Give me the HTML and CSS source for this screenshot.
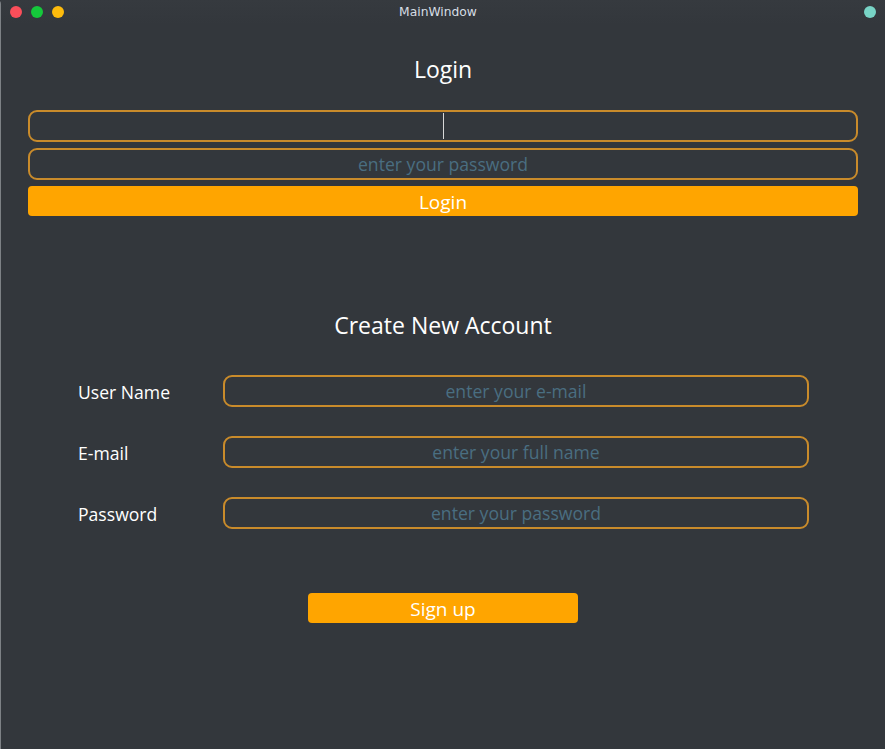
FILE: index.html
```html
<!DOCTYPE html>
<html>
<head>
<meta charset="utf-8">
<title>MainWindow</title>
<link rel="stylesheet" href="styles.css">
</head>
<body>
<div class="window">
  <div class="titlebar">
    <div class="lights">
      <span class="light red"></span>
      <span class="light green"></span>
      <span class="light yellow"></span>
    </div>
    <div class="title">MainWindow</div>
    <span class="light teal"></span>
  </div>
  <div class="content">
    <section class="login">
      <h1 class="heading">Login</h1>
      <div class="field"><span class="caret"></span></div>
      <div class="field"><span class="placeholder">enter your password</span></div>
      <button class="btn btn-wide">Login</button>
    </section>
    <section class="signup">
      <h2 class="heading heading-signup">Create New Account</h2>
      <div class="form">
        <div class="row">
          <label class="label">User Name</label>
          <div class="field field-form"><span class="placeholder">enter your e-mail</span></div>
        </div>
        <div class="row">
          <label class="label">E-mail</label>
          <div class="field field-form"><span class="placeholder">enter your full name</span></div>
        </div>
        <div class="row">
          <label class="label">Password</label>
          <div class="field field-form"><span class="placeholder">enter your password</span></div>
        </div>
      </div>
      <div class="signup-actions">
        <button class="btn btn-signup">Sign up</button>
      </div>
    </section>
  </div>
</div>
</body>
</html>
```

FILE: styles.css
```css
html, body {
  margin: 0;
  padding: 0;
  background: #33373c;
}
body {
  width: 885px;
  height: 749px;
  overflow: hidden;
  font-family: "Open Sans", "Noto Sans", "DejaVu Sans", sans-serif;
  color: #ffffff;
}
.window {
  width: 885px;
  height: 749px;
  box-sizing: border-box;
  border-left: 1px solid #7d8185;
  border-top-left-radius: 4px;
  background: #33373c;
}
.titlebar {
  height: 24px;
  display: flex;
  align-items: center;
  position: relative;
  background: linear-gradient(#363a3f, #33373c);
}
.lights {
  display: flex;
  gap: 9px;
  padding-left: 9px;
}
.light {
  width: 12px;
  height: 12px;
  border-radius: 50%;
  display: block;
}
.red { background: #fb4e5a; }
.green { background: #15c83b; }
.yellow { background: #fdbb0c; }
.teal {
  background: #78d4c6;
  margin-left: auto;
  margin-right: 9px;
}
.title {
  position: absolute;
  left: 0;
  right: 10px;
  text-align: center;
  font-family: "DejaVu Sans", sans-serif;
  font-size: 12.3px;
  color: #d6dde4;
  pointer-events: none;
  top: 5px;
}
.content {
  padding: 0 27px 0 27px;
}
.heading {
  margin: 0;
  text-align: center;
  font-weight: 400;
  font-size: 23px;
  line-height: 28px;
  color: #ffffff;
}
.login .heading {
  padding-top: 31px;
  margin-bottom: 27px;
}
.field {
  height: 32px;
  box-sizing: border-box;
  border: 2px solid #c98b2b;
  border-radius: 9px;
  display: flex;
  align-items: center;
  justify-content: center;
  margin-bottom: 6px;
  position: relative;
}
.caret {
  display: block;
  width: 1px;
  height: 26px;
  background: #d8d8d8;
}
.placeholder {
  font-size: 17.6px;
  color: #4a6e81;
  line-height: 1;
  padding-top: 1px;
}
.btn {
  display: block;
  border: none;
  background: #ffa500;
  color: #ffffff;
  font-family: "Open Sans", "Noto Sans", sans-serif;
  font-size: 19px;
  height: 30px;
  border-radius: 4px;
  padding: 1px 0 0;
  cursor: pointer;
}
.btn-wide {
  width: 100%;
}
.signup {
  padding-top: 95px;
}
.heading-signup {
  margin-bottom: 36px;
}
.form {
  display: flex;
  flex-direction: column;
  gap: 29px;
  padding-left: 50px;
  padding-right: 49px;
}
.row {
  display: grid;
  grid-template-columns: 145px 1fr;
  align-items: center;
}
.label {
  font-size: 17.6px;
  color: #ffffff;
  padding-top: 1px;
}
.field-form {
  margin-bottom: 0;
}
.signup-actions {
  display: flex;
  justify-content: center;
  padding-top: 64px;
}
.btn-signup {
  width: 270px;
}
```
